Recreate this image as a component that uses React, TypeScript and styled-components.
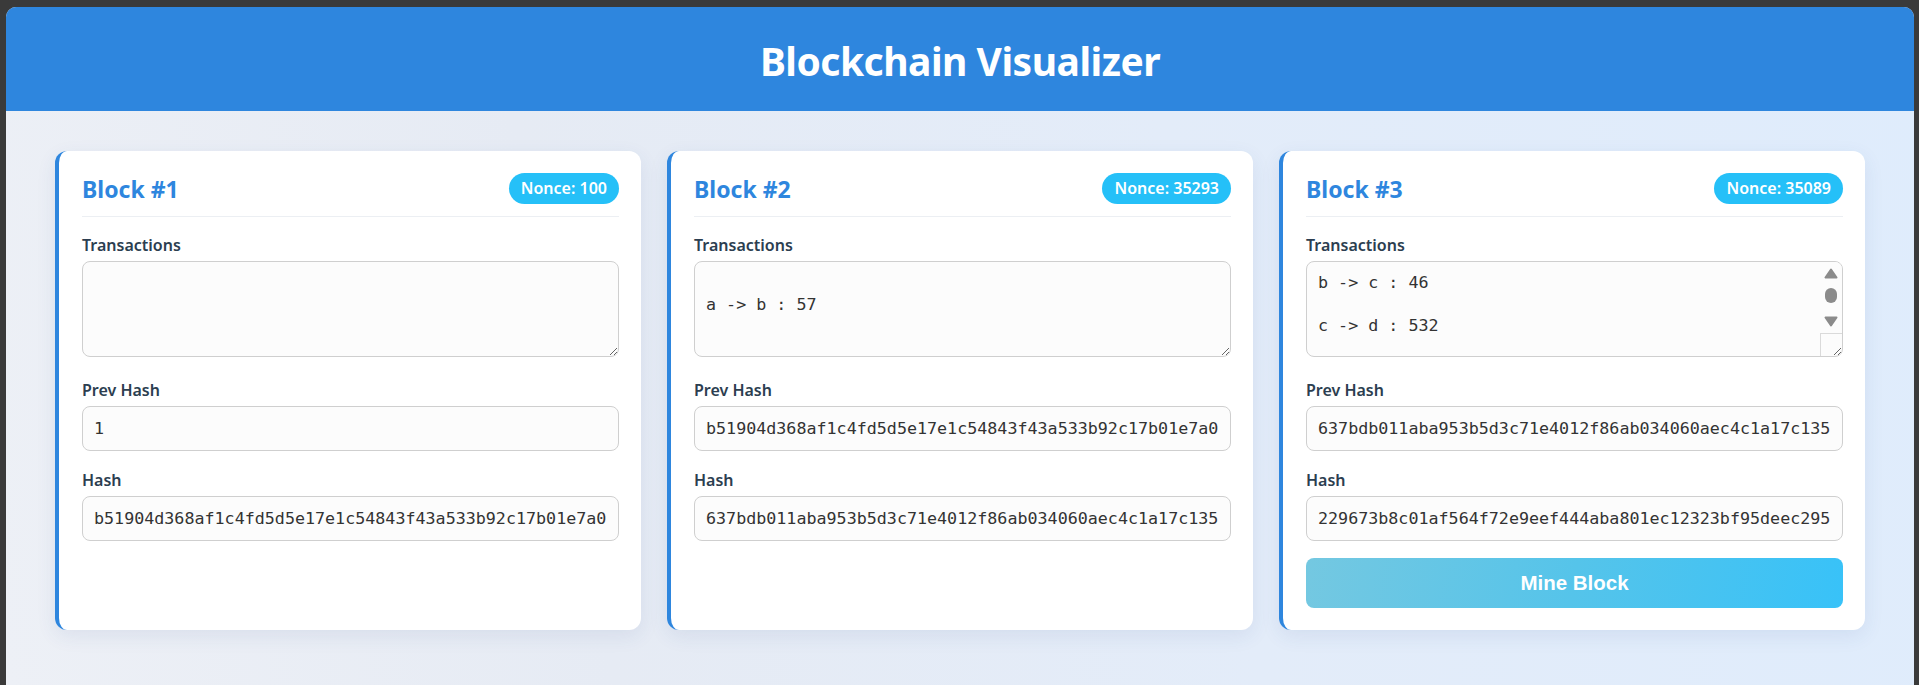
import React from "react";
import styled, { createGlobalStyle } from "styled-components";

const GlobalStyle = createGlobalStyle`
  html, body {
    margin: 0;
    padding: 0;
    height: 100%;
    background: #3a3a3a;
  }
  body {
    padding: 7px 5px 0 6px;
    box-sizing: border-box;
    overflow: hidden;
  }
  #root {
    height: 100%;
  }
`;

const Page = styled.div`
  height: 100%;
  border-radius: 10px 10px 0 0;
  overflow: hidden;
  font-family: "Noto Sans", "Open Sans", sans-serif;
  background: linear-gradient(80deg, #edf0f6 0%, #e6ebf4 30%, #e3ecf9 62%, #dfecfc 100%);
`;

const Header = styled.header`
  height: 104px;
  box-sizing: border-box;
  padding-top: 5px;
  background: #2e86de;
  display: flex;
  align-items: center;
  justify-content: center;
`;

const Title = styled.h1`
  margin: 0;
  color: #ffffff;
  font-size: 39px;
  letter-spacing: -0.5px;
  font-weight: 700;
  line-height: 1.2;
`;

const Chain = styled.main`
  display: grid;
  grid-template-columns: repeat(3, 1fr);
  gap: 26px;
  padding: 40px 49px;
  align-items: stretch;
`;

const Card = styled.section`
  background: #ffffff;
  border-radius: 12px;
  border-left: 4px solid #2e86de;
  padding: 22px 22px 22px 23px;
  box-shadow: 0 6px 20px rgba(40, 80, 140, 0.09);
`;

const CardHeader = styled.div`
  display: flex;
  align-items: center;
  justify-content: space-between;
  padding-bottom: 12px;
  border-bottom: 1px solid #eceff3;
  margin-bottom: 16px;
`;

const BlockTitle = styled.h2`
  margin: 0;
  padding-top: 2px;
  font-size: 23px;
  font-weight: 700;
  line-height: 29px;
  color: #2e86de;
`;

const Nonce = styled.span`
  background: #25c0f8;
  color: #ffffff;
  font-size: 16px;
  font-weight: 600;
  line-height: 23px;
  padding: 4px 12px;
  border-radius: 20px;
`;

const Field = styled.div`
  display: flex;
  flex-direction: column;
  margin-bottom: 17px;
`;

const Label = styled.label`
  display: block;
  font-size: 16px;
  font-weight: 600;
  line-height: 25px;
  color: #2c3e50;
  margin-bottom: 3px;
`;

const mono = `"DejaVu Sans Mono", "Liberation Mono", monospace`;

const AreaWrap = styled.div`
  position: relative;
  margin-bottom: 4.3px;
`;

const TxArea = styled.textarea<{ $scroll?: boolean }>`
  display: block;
  width: 100%;
  box-sizing: border-box;
  height: 95.5px;
  margin: 0;
  padding: 10px ${(p) => (p.$scroll ? "33px" : "11px")} 10px 11px;
  border: 1px solid #cfcfcf;
  border-radius: 8px;
  background: #fcfcfc;
  color: #333333;
  font-family: ${mono};
  font-size: 16.7px;
  line-height: 21.7px;
  overflow: hidden;
  outline: none;
`;

const ScrollBar = styled.div`
  position: absolute;
  top: 1px;
  right: 1px;
  bottom: 1px;
  width: 22px;
  display: flex;
  flex-direction: column;
  border-radius: 0 7px 7px 0;
  overflow: hidden;
  pointer-events: none;
`;

const ScrollArrow = styled.div`
  height: 22px;
  flex: none;
  display: flex;
  align-items: center;
  justify-content: center;
  background: #fcfcfc;
`;

const ScrollTrack = styled.div`
  flex: 1;
  display: flex;
  justify-content: center;
  background: #fcfcfc;
`;

const ScrollThumb = styled.div`
  margin-top: 4.4px;
  width: 11.5px;
  height: 14.6px;
  border-radius: 6px;
  background: #8b8b8b;
`;

const ScrollCorner = styled.div`
  height: 23px;
  flex: none;
  box-sizing: border-box;
  border-left: 1px solid #dadada;
  border-top: 1px solid #dadada;
  background: transparent;
`;

const HashInput = styled.input`
  display: block;
  width: 100%;
  box-sizing: border-box;
  height: 45px;
  margin: 0;
  padding: 0 11px;
  border: 1px solid #cfcfcf;
  border-radius: 8px;
  background: #fcfcfc;
  color: #333333;
  font-family: ${mono};
  font-size: 16.7px;
  outline: none;
`;

const MineButton = styled.button`
  display: block;
  width: 100%;
  height: 50.5px;
  border: none;
  border-radius: 8px;
  background: linear-gradient(100deg, #74c8e1 0%, #55c4ea 50%, #38c2f8 100%);
  color: #ffffff;
  font-family: "Liberation Sans", Arial, sans-serif;
  font-size: 20.5px;
  font-weight: 700;
  cursor: pointer;
`;

const Arrow = ({ down }: { down?: boolean }) => (
  <svg width="14" height="11" viewBox="0 0 14 11">
    <polygon
      points={down ? "1.5,1.5 12.5,1.5 7,9.5" : "1.5,9.5 12.5,9.5 7,1.5"}
      fill="#8b8b8b"
      stroke="#8b8b8b"
      strokeWidth="2"
      strokeLinejoin="round"
    />
  </svg>
);

type Block = {
  id: number;
  nonce: number;
  data: string;
  prev: string;
  hash: string;
  mine?: boolean;
  scroll?: boolean;
};

const blocks: Block[] = [
  {
    id: 1,
    nonce: 100,
    data: "",
    prev: "1",
    hash: "b51904d368af1c4fd5d5e17e1c54843f43a533b92c17b01e7a0",
  },
  {
    id: 2,
    nonce: 35293,
    data: "\na -> b : 57",
    prev: "b51904d368af1c4fd5d5e17e1c54843f43a533b92c17b01e7a0",
    hash: "637bdb011aba953b5d3c71e4012f86ab034060aec4c1a17c135",
  },
  {
    id: 3,
    nonce: 35089,
    data: "b -> c : 46\n\nc -> d : 532\n",
    prev: "637bdb011aba953b5d3c71e4012f86ab034060aec4c1a17c135",
    hash: "229673b8c01af564f72e9eef444aba801ec12323bf95deec295",
    mine: true,
    scroll: true,
  },
];

export default function App() {
  return (
    <>
      <GlobalStyle />
      <Page>
        <Header>
          <Title>Blockchain Visualizer</Title>
        </Header>
        <Chain>
          {blocks.map((b) => (
            <Card key={b.id}>
              <CardHeader>
                <BlockTitle>Block #{b.id}</BlockTitle>
                <Nonce>Nonce: {b.nonce}</Nonce>
              </CardHeader>
              <Field>
                <Label>Transactions</Label>
                <AreaWrap>
                  <TxArea
                    $scroll={b.scroll}
                    value={b.data}
                    readOnly
                    spellCheck={false}
                  />
                  {b.scroll && (
                    <ScrollBar>
                      <ScrollArrow>
                        <Arrow />
                      </ScrollArrow>
                      <ScrollTrack>
                        <ScrollThumb />
                      </ScrollTrack>
                      <ScrollArrow>
                        <Arrow down />
                      </ScrollArrow>
                      <ScrollCorner />
                    </ScrollBar>
                  )}
                </AreaWrap>
              </Field>
              <Field>
                <Label>Prev Hash</Label>
                <HashInput value={b.prev} readOnly />
              </Field>
              <Field>
                <Label>Hash</Label>
                <HashInput value={b.hash} readOnly />
              </Field>
              {b.mine && <MineButton>Mine Block</MineButton>}
            </Card>
          ))}
        </Chain>
      </Page>
    </>
  );
}
